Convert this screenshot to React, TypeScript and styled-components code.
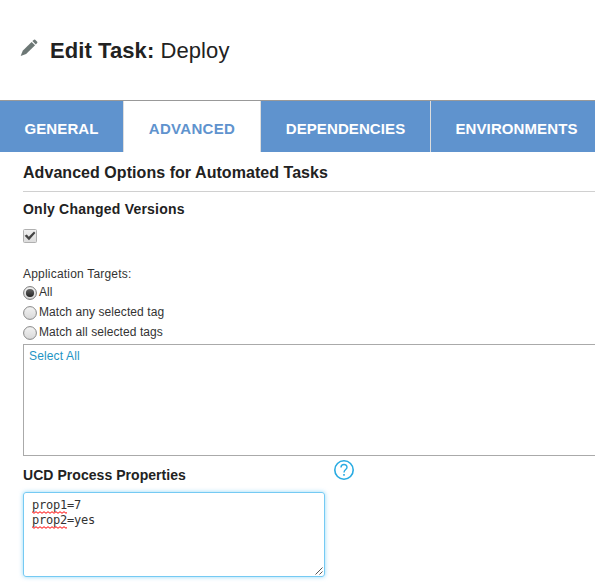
import React from "react";
import styled, { createGlobalStyle } from "styled-components";

const GlobalStyle = createGlobalStyle`
  * { box-sizing: border-box; }
  body {
    margin: 0;
    background: #fff;
    color: #222;
    font-family: "Liberation Sans", Arial, sans-serif;
    overflow: hidden;
  }
`;

const Page = styled.main`
  width: 100%;
  height: 582px;
  overflow: hidden;
`;

const Header = styled.header`
  display: flex;
  align-items: center;
  height: 100px;
  padding-left: 20px;
`;

const PencilIcon = styled.svg`
  width: 18px;
  height: 18px;
  margin-top: -4px;
`;

const Title = styled.h1`
  margin: 2px 0 0 12px;
  font-size: 22px;
  line-height: 26px;
  font-weight: 700;
  letter-spacing: 0.08px;
  white-space: nowrap;
`;

const TaskName = styled.span`
  font-weight: 400;
`;

const TabBar = styled.nav`
  display: flex;
  height: 52px;
  border-top: 1px solid #999;
`;

const Tab = styled.button<{ $width: number; $active?: boolean }>`
  flex: none;
  width: ${(p) => p.$width}px;
  padding: 4px 0 0;
  border: 0;
  border-right: 1px solid #ddd;
  background: ${(p) => (p.$active ? "#fff" : "#5f93ce")};
  color: ${(p) => (p.$active ? "#5f93ce" : "#fff")};
  font: 700 15px/18px "Liberation Sans", Arial, sans-serif;
  letter-spacing: ${(p) => (p.$active ? 0.3 : 0.1)}px;
  text-align: center;
`;

const Content = styled.section`
  display: flex;
  flex-direction: column;
  padding-left: 23px;
`;

const SectionHeading = styled.h2`
  height: 40px;
  margin: 0;
  padding-top: 11px;
  border-bottom: 1px solid #d0d0d0;
  font-size: 16px;
  line-height: 20px;
  letter-spacing: 0.05px;
`;

const FieldHeading = styled.h3<{ $spacing?: number }>`
  margin: 0;
  font-size: 14px;
  line-height: 18px;
  letter-spacing: ${(p) => p.$spacing ?? 0}px;
`;

const VersionsField = styled.div`
  display: flex;
  flex-direction: column;
  gap: 11px;
  height: 74px;
  padding-top: 8px;
`;

const Mark = styled.svg`
  display: block;
  flex: none;
  width: 14px;
  height: 14px;
`;

const TargetsLabel = styled.div`
  height: 17px;
  font-size: 12px;
  line-height: 16px;
  letter-spacing: 0.2px;
  color: #333;
`;

const RadioRow = styled.label`
  display: flex;
  gap: 2px;
  height: 20px;
  font-size: 12px;
  line-height: 18px;
  letter-spacing: 0.08px;
  color: #333;

  ${Mark} {
    margin-top: 3px;
  }
`;

const TagBox = styled.div`
  height: 112px;
  margin-top: 1px;
  padding: 3px 5px;
  border: 1px solid #aaa;
  border-right: 0;
  font-size: 12px;
  line-height: 16px;
  letter-spacing: 0.15px;
`;

const SelectLink = styled.a`
  color: #1e94c4;
`;

const PropertiesHeader = styled.div`
  display: flex;
  justify-content: space-between;
  width: 331px;
  height: 36px;
  padding-top: 4px;

  ${FieldHeading} {
    margin-top: 6px;
  }
`;

const HelpButton = styled.button`
  display: flex;
  width: 20px;
  height: 20px;
  padding: 0;
  border: 0;
  background: none;
`;

const Editor = styled.div`
  position: relative;
  width: 302px;
  height: 85px;
  padding: 5px 8px;
  border: 1px solid #75caf3;
  border-radius: 3px;
  box-shadow: 0 0 4px rgba(90, 195, 245, 0.65);
  color: #333;
  font-family: "DejaVu Sans Mono", monospace;
  font-size: 12px;
  line-height: 15px;
  letter-spacing: -0.22px;
`;

const Misspelled = styled.span`
  position: relative;
`;

const Squiggle = styled.svg`
  position: absolute;
  left: 0;
  bottom: -2px;
  width: 35px;
  height: 3px;
`;

const Grip = styled.svg`
  position: absolute;
  right: 1px;
  bottom: 1px;
  width: 8px;
  height: 8px;
`;

const TABS = [
  { label: "GENERAL", width: 124 },
  { label: "ADVANCED", width: 137, active: true },
  { label: "DEPENDENCIES", width: 170 },
  { label: "ENVIRONMENTS", width: 172 },
];

const TARGETS = ["All", "Match any selected tag", "Match all selected tags"];

const PROPERTIES = [
  { name: "prop1", value: "7" },
  { name: "prop2", value: "yes" },
];

function CheckMark() {
  return (
    <Mark viewBox="0 0 14 14">
      <defs>
        <linearGradient id="check-fill" x2="0" y2="1">
          <stop stopColor="#f0f0f0" />
          <stop offset="1" stopColor="#dcdcdc" />
        </linearGradient>
      </defs>
      <rect x=".5" y=".5" width="13" height="13" rx="1" fill="url(#check-fill)" stroke="#b0b0b0" />
      <path d="M1.6 6.8 3.8 5.4 5.8 7.8 11 2.4 12.4 4 6 11.2Z" fill="#444" />
    </Mark>
  );
}

function RadioMark({ checked }: { checked: boolean }) {
  return (
    <Mark viewBox="0 0 14 14">
      <defs>
        <linearGradient id="radio-fill" x2="0" y2="1">
          <stop stopColor="#f3f3f3" />
          <stop offset="1" stopColor="#d8d8d8" />
        </linearGradient>
        <linearGradient id="radio-dot" x2="0" y2="1">
          <stop stopColor="#666" />
          <stop offset="1" stopColor="#222" />
        </linearGradient>
      </defs>
      <circle cx="7" cy="7" r="6.4" fill="url(#radio-fill)" stroke={checked ? "#777" : "#888"} />
      {checked && <circle cx="7" cy="7" r="4.1" fill="url(#radio-dot)" />}
    </Mark>
  );
}

function Word({ children }: { children: string }) {
  return (
    <Misspelled>
      {children}
      <Squiggle viewBox="0 0 35 3">
        <path
          d={"M0 .7" + Array.from({ length: 9 }, () => "l2 1.6l2-1.6").join("")}
          fill="none"
          stroke="#f00"
          strokeWidth="1"
        />
      </Squiggle>
    </Misspelled>
  );
}

export default function App() {
  return (
    <Page>
      <GlobalStyle />
      <Header>
        <PencilIcon viewBox="0 0 18 18" fill="#6c7775">
          <path d="M.7 17 2.7 11.8 11.6 2.9 15.1 6.3 6.1 15.1Z" />
          <path d="M12.4 2.1 14 .7Q14.6.3 15.2.8L17.2 2.8Q17.7 3.4 17.2 4L15.8 5.5Z" />
        </PencilIcon>
        <Title>
          Edit Task: <TaskName>Deploy</TaskName>
        </Title>
      </Header>
      <TabBar>
        {TABS.map((tab) => (
          <Tab key={tab.label} $width={tab.width} $active={tab.active}>
            {tab.label}
          </Tab>
        ))}
      </TabBar>
      <Content>
        <SectionHeading>Advanced Options for Automated Tasks</SectionHeading>
        <VersionsField>
          <FieldHeading $spacing={0.22}>Only Changed Versions</FieldHeading>
          <CheckMark />
        </VersionsField>
        <TargetsLabel>Application Targets:</TargetsLabel>
        {TARGETS.map((target, i) => (
          <RadioRow key={target}>
            <RadioMark checked={i === 0} />
            {target}
          </RadioRow>
        ))}
        <TagBox>
          <SelectLink>Select All</SelectLink>
        </TagBox>
        <PropertiesHeader>
          <FieldHeading $spacing={0.05}>UCD Process Properties</FieldHeading>
          <HelpButton aria-label="Help">
            <svg width="20" height="20" viewBox="0 0 20 20" fill="none" stroke="#29abe2">
              <circle cx="10" cy="10" r="9.2" strokeWidth="1.6" />
              <path d="M7 7.5C7 3.5 13 3.6 13 7.2C13 9.7 10 9.5 10 12.5" strokeWidth="1.4" />
              <path d="M10 14v1.8" strokeWidth="1.6" />
            </svg>
          </HelpButton>
        </PropertiesHeader>
        <Editor>
          {PROPERTIES.map((property) => (
            <div key={property.name}>
              <Word>{property.name}</Word>={property.value}
            </div>
          ))}
          <Grip viewBox="0 0 8 8">
            <path d="M.5 7.5l7-7M4.5 7.5l3-3" stroke="#555" fill="none" />
          </Grip>
        </Editor>
      </Content>
    </Page>
  );
}
